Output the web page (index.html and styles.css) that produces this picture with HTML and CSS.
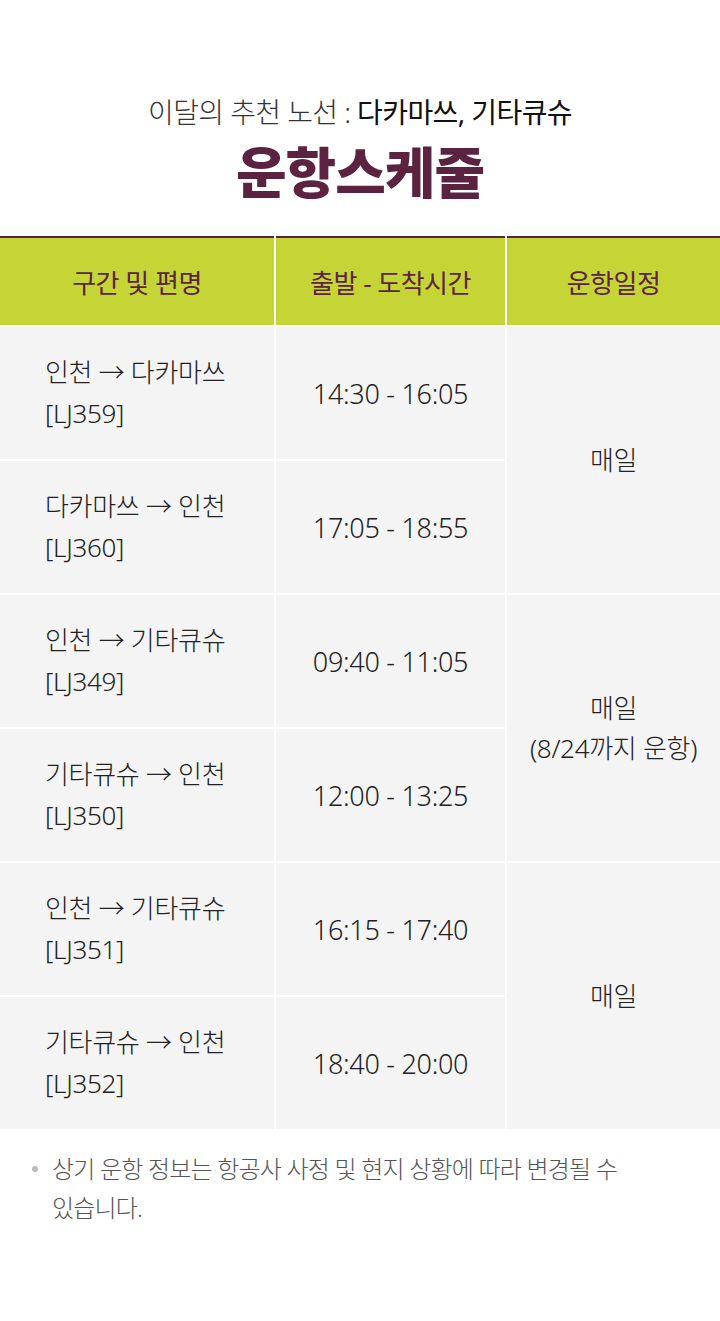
FILE: index.html
```html
<!DOCTYPE html>
<html lang="ko">
<head>
<meta charset="utf-8">
<link rel="stylesheet" href="styles.css">
</head>
<body>
<div class="page">
  <header class="head">
    <p class="sub">이달의 추천 노선 : <span class="dest">다카마쓰, 기타큐슈</span></p>
    <h1 class="title">운항스케줄</h1>
  </header>
  <table class="sched">
    <thead>
      <tr>
        <th class="c1">구간 및 편명</th>
        <th class="c2">출발 - 도착시간</th>
        <th class="c3">운항일정</th>
      </tr>
    </thead>
    <tbody>
      <tr>
        <td class="route">인천 → 다카마쓰<br>[LJ359]</td>
        <td class="time">14:30 - 16:05</td>
        <td class="days" rowspan="2">매일</td>
      </tr>
      <tr>
        <td class="route">다카마쓰 → 인천<br>[LJ360]</td>
        <td class="time">17:05 - 18:55</td>
      </tr>
      <tr>
        <td class="route">인천 → 기타큐슈<br>[LJ349]</td>
        <td class="time">09:40 - 11:05</td>
        <td class="days" rowspan="2">매일<br>(8/24까지 운항)</td>
      </tr>
      <tr>
        <td class="route">기타큐슈 → 인천<br>[LJ350]</td>
        <td class="time">12:00 - 13:25</td>
      </tr>
      <tr class="last-pair">
        <td class="route">인천 → 기타큐슈<br>[LJ351]</td>
        <td class="time">16:15 - 17:40</td>
        <td class="days final" rowspan="2">매일</td>
      </tr>
      <tr class="last-row">
        <td class="route">기타큐슈 → 인천<br>[LJ352]</td>
        <td class="time">18:40 - 20:00</td>
      </tr>
    </tbody>
  </table>
  <ul class="notes">
    <li>상기 운항 정보는 항공사 사정 및 현지 상황에 따라 변경될 수 있습니다.</li>
  </ul>
</div>
</body>
</html>
```

FILE: styles.css
```css
html, body {
  margin: 0;
  padding: 0;
  background: #fff;
}
body {
  font-family: "Noto Sans", "Noto Sans CJK KR", sans-serif;
  color: #222;
}
.page {
  width: 720px;
}
.head {
  text-align: center;
  padding-top: 91px;
  padding-bottom: 33px;
}
.sub {
  margin: 0;
  font-size: 28px;
  line-height: 42px;
  font-weight: 300;
  color: #333;
  letter-spacing: -0.6px;
}
.dest {
  color: #111;
  font-weight: 400;
}
.title {
  margin: 2px 0 0;
  font-family: "Noto Sans CJK KR", sans-serif;
  font-size: 55px;
  line-height: 68px;
  font-weight: 900;
  color: #5c2341;
  letter-spacing: -1px;
}
.sched {
  width: 720px;
  border-collapse: collapse;
  table-layout: fixed;
  border-top: 2px solid #5c2341;
}
.sched th,
.sched td {
  border-left: 2px solid #fff;
  border-bottom: 2px solid #fff;
  padding: 0;
}
.sched th:first-child,
.sched td.route {
  border-left: none;
}
.c1 { width: 274px; }
.c2 { width: 229px; }
.sched th {
  height: 87px;
  background: #c5d535;
  color: #5c2341;
  font-size: 26px;
  font-weight: 400;
  letter-spacing: -0.5px;
}
.sched td {
  height: 132px;
  background: #f4f4f4;
  font-size: 26px;
  line-height: 41px;
  font-weight: 300;
  color: #222;
  letter-spacing: -0.3px;
}
.route {
  padding-left: 45px !important;
  text-align: left;
}
.time {
  text-align: center;
  font-size: 27px !important;
}
.days {
  text-align: center;
  line-height: 40px !important;
}
.last-row td,
.days.final {
  border-bottom: none;
}
.notes {
  list-style: none;
  margin: 20px 0 0;
  padding: 0 90px 0 52px;
}
.notes li {
  position: relative;
  font-size: 24px;
  line-height: 39px;
  font-weight: 300;
  color: #555;
  letter-spacing: -0.8px;
}
.notes li::before {
  content: "";
  position: absolute;
  left: -20px;
  top: 17px;
  width: 6px;
  height: 6px;
  border-radius: 50%;
  background: #bbb;
}
```
